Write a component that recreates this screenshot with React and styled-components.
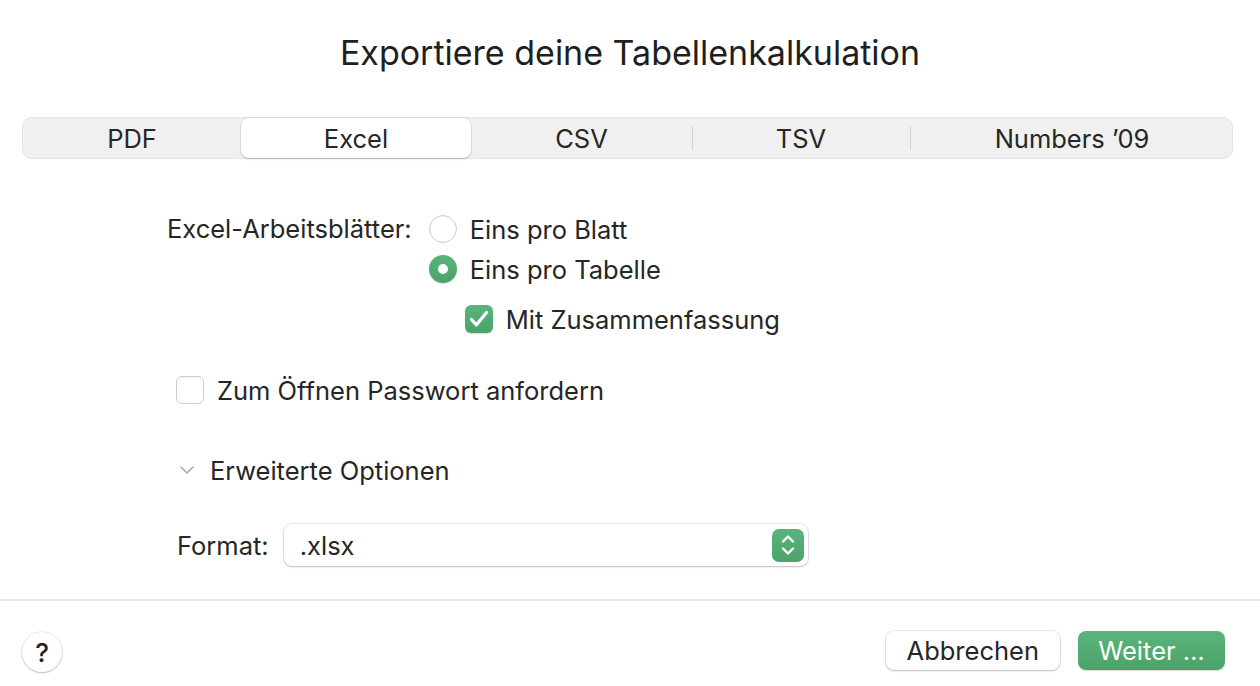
import React from 'react'
import styled, { createGlobalStyle } from 'styled-components'

const Global = createGlobalStyle`
  html, body {
    margin: 0;
    background: #ffffff;
  }
  body {
    font-family: Inter, "Noto Sans", "Liberation Sans", sans-serif;
    color: #262626;
  }
`

const GREEN = 'linear-gradient(180deg, #5ab47b 0%, #4aa469 100%)'
const FS = '25.5px'

const tabs = [
  { label: 'PDF', width: 218 },
  { label: 'Excel', width: 230 },
  { label: 'CSV', width: 221 },
  { label: 'TSV', width: 218 },
  { label: 'Numbers ’09', width: 324 },
]

const App = () => {
  const active = 1

  return (
    <Dialog>
      <Global />
      <Title>Exportiere deine Tabellenkalkulation</Title>

      <Segmented>
        {tabs.map((t, i) => (
          <Segment
            key={t.label}
            $w={t.width}
            $active={i === active}
            $divider={i > 0 && i !== active && i - 1 !== active}
          >
            {t.label}
          </Segment>
        ))}
      </Segmented>

      <Form>
        <SheetRow>
          <FieldLabel>Excel-Arbeitsblätter:</FieldLabel>
          <Options>
            <Option>
              <Radio />
              Eins pro Blatt
            </Option>
            <Option>
              <Radio $checked />
              Eins pro Tabelle
            </Option>
            <SubOption>
              <Check $checked>
                <svg width="28" height="28" viewBox="0 0 28 28">
                  <path d="M6.5 14.5 L11.5 19.8 L21.5 7.5" fill="none" stroke="#fff" strokeWidth="3.2" strokeLinecap="round" strokeLinejoin="round" />
                </svg>
              </Check>
              Mit Zusammenfassung
            </SubOption>
          </Options>
        </SheetRow>

        <Option $gap={31}>
          <Check />
          Zum Öffnen Passwort anfordern
        </Option>

        <Disclosure>
          <svg width="16" height="10" viewBox="0 0 16 10">
            <path d="M2 2 L8 8 L14 2" fill="none" stroke="#a8a8a8" strokeWidth="1.6" strokeLinecap="round" strokeLinejoin="round" />
          </svg>
          Erweiterte Optionen
        </Disclosure>

        <FormatRow>
          Format:
          <Select>
            .xlsx
            <Stepper>
              <svg width="18" height="28" viewBox="0 0 18 28">
                <path d="M4 10.5 L9 5.5 L14 10.5 M4 17.5 L9 22.5 L14 17.5" fill="none" stroke="#fff" strokeWidth="2.4" strokeLinecap="round" strokeLinejoin="round" />
              </svg>
            </Stepper>
          </Select>
        </FormatRow>
      </Form>

      <Footer>
        <HelpButton>?</HelpButton>
        <Buttons>
          <Button>Abbrechen</Button>
          <Button $primary>Weiter …</Button>
        </Buttons>
      </Footer>
    </Dialog>
  )
}

const Dialog = styled.div`
  width: 1260px;
  height: 686px;
  display: flex;
  flex-direction: column;
  overflow: hidden;
`

const Title = styled.h1`
  margin: 0;
  padding-top: 33px;
  height: 40px;
  line-height: 40px;
  text-align: center;
  font-size: 34px;
  font-weight: 400;
  color: #1f1f1f;
`

const Segmented = styled.div`
  margin: 44px 27px 0 22px;
  height: 42px;
  box-sizing: border-box;
  display: flex;
  background: #f0f0f0;
  border: 1px solid #e4e4e4;
  border-radius: 10px;
`

const Segment = styled.div`
  position: relative;
  flex: 0 0 ${p => p.$w}px;
  display: flex;
  align-items: center;
  justify-content: center;
  font-size: ${FS};
  color: #262626;
  border-radius: 8px;
  background: ${p => (p.$active ? '#ffffff' : 'transparent')};
  box-shadow: ${p => (p.$active ? '0 1px 2px rgba(0,0,0,0.22), 0 0 0 0.5px rgba(0,0,0,0.08)' : 'none')};

  &::before {
    content: '';
    display: ${p => (p.$divider ? 'block' : 'none')};
    position: absolute;
    left: 0;
    top: 8px;
    bottom: 8px;
    width: 1px;
    background: #d2d2d2;
  }
`

const Form = styled.div`
  margin-top: 50px;
  padding-left: 176px;
  display: flex;
  flex-direction: column;
  height: 390px;
`

const SheetRow = styled.div`
  display: flex;
  margin-left: -9px;
`

const FieldLabel = styled.div`
  line-height: 40px;
  font-size: ${FS};
  margin-right: 17px;
`

const Options = styled.div`
  display: flex;
  flex-direction: column;
`

const Option = styled.div`
  display: flex;
  align-items: center;
  gap: 13px;
  height: 40px;
  font-size: ${FS};
  margin-top: ${p => p.$gap || 0}px;
`

const SubOption = styled(Option)`
  margin-top: 10px;
  padding-left: 36px;
`

const Radio = styled.span`
  width: 28px;
  height: 28px;
  box-sizing: border-box;
  border-radius: 50%;
  flex: none;
  display: flex;
  align-items: center;
  justify-content: center;
  background: ${p => (p.$checked ? GREEN : '#ffffff')};
  border: ${p => (p.$checked ? 'none' : '1px solid #cdcdcd')};
  box-shadow: ${p => (p.$checked ? '0 1px 1px rgba(0,0,0,0.15)' : 'inset 0 1px 1px rgba(0,0,0,0.04)')};

  &::after {
    content: '';
    display: ${p => (p.$checked ? 'block' : 'none')};
    width: 10px;
    height: 10px;
    border-radius: 50%;
    background: #ffffff;
  }
`

const Check = styled.span`
  width: 28px;
  height: 28px;
  box-sizing: border-box;
  border-radius: 6px;
  flex: none;
  display: flex;
  align-items: center;
  justify-content: center;
  background: ${p => (p.$checked ? GREEN : '#ffffff')};
  border: ${p => (p.$checked ? 'none' : '1px solid #cdcdcd')};
  box-shadow: ${p => (p.$checked ? '0 1px 1px rgba(0,0,0,0.15)' : 'inset 0 1px 1px rgba(0,0,0,0.04)')};
`

const Disclosure = styled.div`
  display: flex;
  align-items: center;
  gap: 15px;
  height: 40px;
  margin-top: 40px;
  padding-left: 3px;
  font-size: ${FS};
`

const FormatRow = styled.div`
  display: flex;
  align-items: center;
  gap: 15px;
  margin-top: 34px;
  margin-left: 1px;
  font-size: ${FS};
`

const Select = styled.div`
  width: 524px;
  height: 42px;
  box-sizing: border-box;
  display: flex;
  align-items: center;
  justify-content: space-between;
  padding: 0 4px 0 16px;
  background: #ffffff;
  border-radius: 8px;
  box-shadow: 0 0 0 1px rgba(0,0,0,0.09), 0 1px 2px rgba(0,0,0,0.18);
  font-size: ${FS};
`

const Stepper = styled.span`
  width: 32px;
  height: 33px;
  border-radius: 7px;
  background: ${GREEN};
  display: flex;
  align-items: center;
  justify-content: center;
`

const Footer = styled.div`
  border-top: 2px solid #e6e6e6;
  flex: 1;
  display: flex;
  align-items: flex-start;
  justify-content: space-between;
  padding: 30px 35px 0 22px;
`

const HelpButton = styled.div`
  width: 40px;
  height: 40px;
  margin-top: 1px;
  border-radius: 50%;
  background: #ffffff;
  box-shadow: 0 0 0 1px rgba(0,0,0,0.07), 0 1px 2px rgba(0,0,0,0.2);
  display: flex;
  align-items: center;
  justify-content: center;
  font-size: 26px;
  font-weight: 500;
  color: #222;
`

const Buttons = styled.div`
  display: flex;
  gap: 18px;
`

const Button = styled.div`
  height: 39px;
  box-sizing: border-box;
  padding: 0 ${p => (p.$primary ? '20px' : '21px')};
  min-width: ${p => (p.$primary ? '147px' : '174px')};
  display: flex;
  align-items: center;
  justify-content: center;
  border-radius: 8px;
  font-size: ${FS};
  color: ${p => (p.$primary ? '#ffffff' : '#262626')};
  background: ${p => (p.$primary ? GREEN : '#ffffff')};
  box-shadow: ${p => (p.$primary ? '0 1px 1px rgba(0,0,0,0.15)' : '0 0 0 1px rgba(0,0,0,0.08), 0 1px 2px rgba(0,0,0,0.2)')};
`

export default App
